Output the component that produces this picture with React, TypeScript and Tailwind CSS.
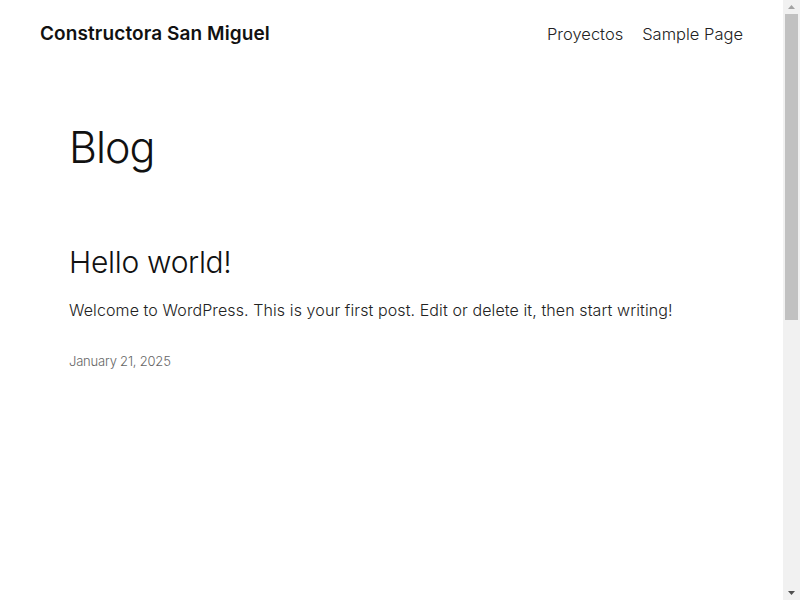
export default function App() {
  return (
    <div className="h-screen flex overflow-hidden bg-white text-[#111111] font-['Inter',sans-serif]">
      <div className="flex-1 min-w-0 overflow-hidden">
        {/* Header */}
        <header className="h-[68px] px-10 flex items-center justify-between">
          <a className="text-[19px] leading-[28px] font-semibold tracking-[0.1px]">Constructora San Miguel</a>
          <nav className="flex items-center gap-[19px] text-[16.5px] leading-[28px] font-light text-[#222222]">
            <a>Proyectos</a>
            <a>Sample Page</a>
          </nav>
        </header>

        <main className="px-[69px]">
          <h1 className="mt-[54px] text-[43px] leading-[1.2] font-light tracking-[-1px]">Blog</h1>

          <article className="mt-[70px]">
            <h2 className="text-[30px] leading-[1.2] font-light tracking-[-0.3px]">Hello world!</h2>
            <p className="mt-[18px] text-[16px] leading-[25.6px] font-light text-[#222222] tracking-[0.1px]">
              Welcome to WordPress. This is your first post. Edit or delete it, then start writing!
            </p>
            <p className="mt-[29px] text-[13px] leading-[19.5px] font-light text-[#666666] tracking-[-0.2px]">January 21, 2025</p>
          </article>
        </main>
      </div>

      {/* Scrollbar */}
      <div className="w-[17px] shrink-0 bg-[#f1f1f1] flex flex-col">
        <div className="h-[14px] flex items-center justify-center">
          <svg width="7" height="4" viewBox="0 0 7 4"><path d="M3.5 0L7 4H0z" fill="#a3a3a3" /></svg>
        </div>
        <div className="h-[306px] mx-[2px] bg-[#c1c1c1]" />
        <div className="flex-1" />
        <div className="h-[14px] flex items-center justify-center">
          <svg width="7" height="4" viewBox="0 0 7 4"><path d="M0 0H7L3.5 4z" fill="#505050" /></svg>
        </div>
      </div>
    </div>
  )
}
